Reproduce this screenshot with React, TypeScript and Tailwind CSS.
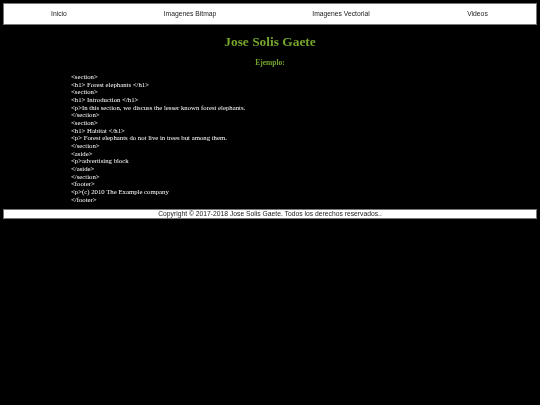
const navItems = [
  { label: "Inicio", width: "w-[110px]" },
  { label: "Imagenes Bitmap", width: "w-[152px]" },
  { label: "Imagenes Vectorial", width: "w-[150px]" },
  { label: "Videos", width: "flex-1 pl-[3px]" },
];

const lines = [
  "<section>",
  "<h1> Forest elephants </h1>",
  "<section>",
  "<h1> Introduction </h1>",
  "<p>In this section, we discuss the lesser known forest elephants.",
  "</section>",
  "<section>",
  "<h1> Habitat </h1>",
  "<p> Forest elephants do not live in trees but among them.",
  "</section>",
  "<aside>",
  "<p>advertising block",
  "</aside>",
  "</section>",
  "<footer>",
  "<p>(c) 2010 The Example company",
  "</footer>",
];

export default function App() {
  return (
    <div className="min-h-[405px] bg-black px-[3px] pt-[3px] font-['Liberation_Serif',serif] text-white will-change-transform">
      <nav className="flex h-[22px] items-center border border-[#777] bg-white font-['Liberation_Sans',sans-serif] text-[6.75px] text-[#222]">
        {navItems.map((item) => (
          <a key={item.label} className={`${item.width} shrink-0 text-center`}>
            {item.label}
          </a>
        ))}
      </nav>
      <h1 className="mt-[9px] text-center text-[13.4px] leading-[16px] font-bold text-[#75a52c]">
        Jose Solis Gaete
      </h1>
      <h2 className="mt-[8px] text-center text-[7.5px] leading-[10px] font-bold text-[#75a52c]">
        Ejemplo:
      </h2>
      <div className="mt-[5px] pl-[68px] text-[6.75px] leading-[7.65px]">
        {lines.map((line, i) => (
          <div key={i}>{line}</div>
        ))}
      </div>
      <footer className="mt-[6px] h-[10px] border border-[#777] bg-white text-center font-['Liberation_Sans',sans-serif] text-[6.75px] leading-[7px] text-[#222]">
        Copyright © 2017-2018 Jose Solis Gaete. Todos los derechos reservados..
      </footer>
    </div>
  );
}
